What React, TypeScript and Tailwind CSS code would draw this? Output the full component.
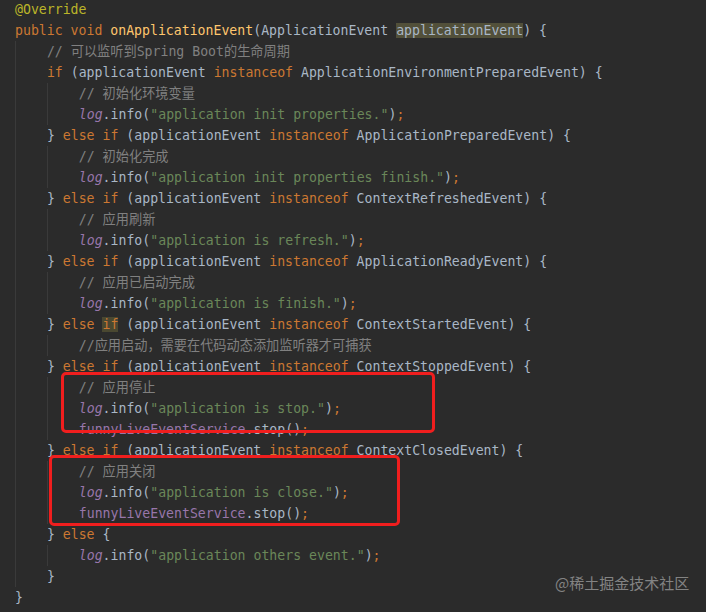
import React from "react";

type Tok = [string, string];

const cls: Record<string, string> = {
  t: "text-[#a9b7c6]",
  k: "text-[#cc7832]",
  s: "text-[#6a8759]",
  c: "text-[#808080]",
  a: "text-[#bbb529]",
  f: "text-[#ffc66d]",
  p: "text-[#9876aa]",
  pi: "text-[#9876aa] italic",
  hl: "text-[#a9b7c6] bg-[#52503a]",
  hk: "text-[#cc7832] bg-[#4a4831]",
};

const logLine = (msg: string): Tok[] => [
  ["pi", "log"],
  ["t", ".info("],
  ["s", `"${msg}"`],
  ["t", ")"],
  ["k", ";"],
];

const elseIf = (type: string, hlIf = false): Tok[] => [
  ["t", "} "],
  ["k", "else "],
  [hlIf ? "hk" : "k", "if"],
  ["t", " (applicationEvent "],
  ["k", "instanceof "],
  ["t", `${type}) {`],
];

const stopLine: Tok[] = [
  ["p", "funnyLiveEventService"],
  ["t", ".stop()"],
  ["k", ";"],
];

const lines: { indent: number; toks: Tok[] }[] = [
  { indent: 0, toks: [["a", "@Override"]] },
  {
    indent: 0,
    toks: [
      ["k", "public void "],
      ["f", "onApplicationEvent"],
      ["t", "(ApplicationEvent "],
      ["hl", "applicationEvent"],
      ["t", ") {"],
    ],
  },
  { indent: 1, toks: [["c", "// 可以监听到Spring Boot的生命周期"]] },
  {
    indent: 1,
    toks: [
      ["k", "if"],
      ["t", " (applicationEvent "],
      ["k", "instanceof "],
      ["t", "ApplicationEnvironmentPreparedEvent) {"],
    ],
  },
  { indent: 2, toks: [["c", "// 初始化环境变量"]] },
  { indent: 2, toks: logLine("application init properties.") },
  { indent: 1, toks: elseIf("ApplicationPreparedEvent") },
  { indent: 2, toks: [["c", "// 初始化完成"]] },
  { indent: 2, toks: logLine("application init properties finish.") },
  { indent: 1, toks: elseIf("ContextRefreshedEvent") },
  { indent: 2, toks: [["c", "// 应用刷新"]] },
  { indent: 2, toks: logLine("application is refresh.") },
  { indent: 1, toks: elseIf("ApplicationReadyEvent") },
  { indent: 2, toks: [["c", "// 应用已启动完成"]] },
  { indent: 2, toks: logLine("application is finish.") },
  { indent: 1, toks: elseIf("ContextStartedEvent", true) },
  { indent: 2, toks: [["c", "//应用启动，需要在代码动态添加监听器才可捕获"]] },
  { indent: 1, toks: elseIf("ContextStoppedEvent") },
  { indent: 2, toks: [["c", "// 应用停止"]] },
  { indent: 2, toks: logLine("application is stop.") },
  { indent: 2, toks: stopLine },
  { indent: 1, toks: elseIf("ContextClosedEvent") },
  { indent: 2, toks: [["c", "// 应用关闭"]] },
  { indent: 2, toks: logLine("application is close.") },
  { indent: 2, toks: stopLine },
  {
    indent: 1,
    toks: [
      ["t", "} "],
      ["k", "else "],
      ["t", "{"],
    ],
  },
  { indent: 2, toks: logLine("application others event.") },
  { indent: 1, toks: [["t", "}"]] },
  { indent: 0, toks: [["t", "}"]] },
];

export default function App() {
  return (
    <div className="relative w-[706px] h-[612px] overflow-hidden bg-[#2b2b2b]">
      <div
        className="flex flex-col pl-[15px] -mt-px text-[13.2px] leading-[21px] whitespace-pre"
        style={{ fontFamily: '"DejaVu Sans Mono", "Noto Sans CJK SC", monospace' }}
      >
        {lines.map((ln, i) => (
          <div key={i} className="flex h-[21px] items-stretch">
            {Array.from({ length: ln.indent }).map((_, j) => (
              <span
                key={j}
                className="inline-block w-[31.9px] shrink-0 border-l border-[#3a3a3a]"
              />
            ))}
            <span>
              {ln.toks.map(([t, s], k) => (
                <span key={k} className={cls[t]}>
                  {s}
                </span>
              ))}
            </span>
          </div>
        ))}
      </div>

      <div className="absolute left-[61px] top-[372px] w-[374px] h-[61px] rounded-[5px] border-[3px] border-[#f01e1e]" />
      <div className="absolute left-[49px] top-[455px] w-[351px] h-[71px] rounded-[5px] border-[3px] border-[#f01e1e]" />

      <div
        className="absolute left-[555px] top-[573px] text-[15px] leading-[20px] text-[#9a9a9a] opacity-80"
        style={{ fontFamily: '"Noto Sans CJK SC", "Noto Sans", sans-serif' }}
      >
        @稀土掘金技术社区
      </div>
    </div>
  );
}
